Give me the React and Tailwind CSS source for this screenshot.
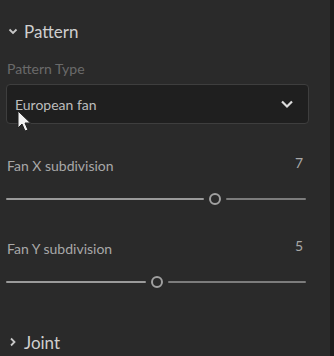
import React from "react";

function Slider({ pos }) {
  return (
    <div className="relative h-[12px] flex items-center">
      <div className="h-[2px] bg-[#9a9a9a] rounded-full" style={{ width: pos - 11 - 6 + "px" }} />
      <div className="w-[12px] h-[12px] rounded-full border-2 border-[#a0a0a0] bg-[#2a2a2a] mx-[5px] shrink-0" />
      <div className="h-[2px] bg-[#7c7c7c] rounded-full flex-1 mr-[24px]" />
    </div>
  );
}

export default function App() {
  return (
    <div className="w-[334px] h-[356px] flex bg-[#292929] overflow-hidden relative" style={{ fontFamily: "Lato, 'Noto Sans', sans-serif" }}>
      <div className="flex-1 flex flex-col pl-[6px] bg-[#2a2a2a]">
        <div className="mt-[19px] h-[24px] flex items-center gap-[6px] pl-[2px]">
          <svg width="10" height="10" viewBox="0 0 10 10"><path d="M1.5 3.5 L5 7 L8.5 3.5" stroke="#c8c8c8" strokeWidth="1.8" fill="none" /></svg>
          <span className="text-[17px] text-[#cfcfcf] leading-none">Pattern</span>
        </div>
        <div className="mt-[17px] h-[16px] flex items-center text-[14px] text-[#6a6a6a] pl-[1px]">Pattern Type</div>
        <div className="mt-[8px] h-[40px] w-[303px] rounded-[4px] border border-[#3e3e3e] bg-[#1f1f1f] flex items-center justify-between pl-[8px] pr-[14px]">
          <span className="text-[14px] text-[#bdbdbd]">European fan</span>
          <svg width="14" height="10" viewBox="0 0 14 10"><path d="M2 2.5 L7 7.5 L12 2.5" stroke="#dcdcdc" strokeWidth="2.2" fill="none" /></svg>
        </div>
        <div className="mt-[33px] h-[16px] flex items-center justify-between pr-[27px] text-[14px] text-[#a8a8a8] pl-[1px]">
          <span>Fan X subdivision</span>
          <span className="-mt-[6px]">7</span>
        </div>
        <div className="mt-[20px]"><Slider pos={215} /></div>
        <div className="mt-[35px] h-[16px] flex items-center justify-between pr-[27px] text-[14px] text-[#a8a8a8] pl-[1px]">
          <span>Fan Y subdivision</span>
          <span className="-mt-[6px]">5</span>
        </div>
        <div className="mt-[20px]"><Slider pos={157} /></div>
        <div className="mt-[42px] h-[24px] flex items-center gap-[7px] pl-[3px]">
          <svg width="8" height="10" viewBox="0 0 8 10"><path d="M2 1.5 L5.5 5 L2 8.5" stroke="#c8c8c8" strokeWidth="1.8" fill="none" /></svg>
          <span className="text-[17px] text-[#cfcfcf] leading-none">Joint</span>
        </div>
      </div>
      <div className="w-[4px] bg-[#1c1c1c]" />
      <svg className="absolute left-[17px] top-[110px]" width="16" height="24" viewBox="0 0 16 24">
        <path d="M1 1 L1 18 L5 14 L8 21 L11 20 L8 13 L13.5 13 Z" fill="#f2f2f2" stroke="#222" strokeWidth="1" />
      </svg>
    </div>
  );
}
